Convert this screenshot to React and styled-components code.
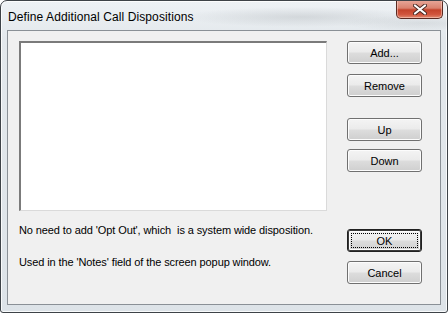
import styled, { createGlobalStyle } from "styled-components";

const GlobalStyle = createGlobalStyle`
  html, body {
    margin: 0;
    padding: 0;
    background: #ffffff;
  }
`;

const Window = styled.div`
  width: 448px;
  height: 313px;
  box-sizing: border-box;
  border: 1px solid #3e4348;
  border-radius: 7px 7px 3px 3px;
  background: linear-gradient(180deg, #eef2f5 0%, #e3e8ec 12%, #dde3e8 100%);
  display: flex;
  flex-direction: column;
  overflow: hidden;
  position: relative;
  box-shadow: inset 0 0 0 1px rgba(255, 255, 255, 0.8);
`;

const TitleBar = styled.div`
  height: 29px;
  flex: none;
  display: flex;
  align-items: flex-start;
  justify-content: space-between;
  padding: 0 4px 0 7px;
  background:
    radial-gradient(ellipse 120px 10px at 300px 16px, rgba(120, 125, 130, 0.2), transparent),
    radial-gradient(ellipse 80px 8px at 420px 22px, rgba(120, 125, 130, 0.14), transparent);
`;

const Title = styled.div`
  font-family: "Liberation Sans", Arial, sans-serif;
  font-size: 12px;
  color: #000;
  margin-top: 9px;
  letter-spacing: 0.1px;
`;

const CloseButton = styled.div`
  width: 47px;
  height: 19px;
  margin-top: -1px;
  box-sizing: border-box;
  border: 1px solid #5a2a22;
  border-top: none;
  border-radius: 0 0 5px 5px;
  background: linear-gradient(180deg, #e8a99b 0%, #d9826f 45%, #c4432b 55%, #d1553d 80%, #e08a70 100%);
  box-shadow: inset 0 0 0 1px rgba(255, 220, 210, 0.5);
  display: flex;
  align-items: center;
  justify-content: center;
`;

const Client = styled.div`
  flex: 1;
  margin: 0 6px 7px 6px;
  border: 1px solid #8a9096;
  background: #f0f0f0;
  display: flex;
  padding: 10px 18px 0 11px;
  gap: 20px;
`;

const LeftColumn = styled.div`
  display: flex;
  flex-direction: column;
`;

const ListBox = styled.div`
  width: 308px;
  height: 170px;
  box-sizing: border-box;
  background: #fff;
  border-top: 2px solid #7b7b7b;
  border-left: 2px solid #7b7b7b;
  border-right: 1px solid #dadada;
  border-bottom: 1px solid #dadada;
`;

const Note = styled.div`
  font-family: "Liberation Sans", Tahoma, sans-serif;
  font-size: 11px;
  letter-spacing: -0.1px;
  color: #000;
  white-space: pre;
  margin-top: ${(p) => p.$top}px;
`;

const ButtonColumn = styled.div`
  display: flex;
  flex-direction: column;
  width: 75px;
`;

const Button = styled.div`
  position: relative;
  height: 23px;
  box-sizing: border-box;
  margin-top: ${(p) => p.$top || 0}px;
  border: 1px solid ${(p) => (p.$default ? "#202020" : "#707070")};
  border-radius: 3px;
  background: linear-gradient(180deg, #f4f4f4 0%, #ebebeb 48%, #dddddd 52%, #cfcfcf 100%);
  box-shadow: ${(p) =>
    p.$default ? "inset 0 0 0 1px #3a3a3a, inset 0 0 0 2px #fcfcfc" : "inset 0 0 0 1px #fcfcfc"};
  display: flex;
  align-items: center;
  justify-content: center;
  font-family: "Liberation Sans", Tahoma, sans-serif;
  font-size: 11px;
  color: #000;

  ${(p) =>
    p.$default &&
    `
    &::after {
      content: "";
      position: absolute;
      inset: 3px;
      border: 1px dotted #000;
    }
  `}
`;

const CloseGlyph = () => (
  <svg width="14" height="11" viewBox="0 0 14 11">
    <path
      d="M2 1.5 L12 9.5 M12 1.5 L2 9.5"
      stroke="#4a2a24"
      strokeWidth="4"
      strokeLinecap="round"
    />
    <path
      d="M2 1.5 L12 9.5 M12 1.5 L2 9.5"
      stroke="#ffffff"
      strokeWidth="2.2"
      strokeLinecap="round"
    />
  </svg>
);

const App = () => {
  return (
    <>
      <GlobalStyle />
      <Window>
        <TitleBar>
          <Title>Define Additional Call Dispositions</Title>
          <CloseButton>
            <CloseGlyph />
          </CloseButton>
        </TitleBar>
        <Client>
          <LeftColumn>
            <ListBox />
            <Note $top={13}>No need to add 'Opt Out', which  is a system wide disposition.</Note>
            <Note $top={20}>Used in the 'Notes' field of the screen popup window.</Note>
          </LeftColumn>
          <ButtonColumn>
            <Button>Add...</Button>
            <Button $top={10}>Remove</Button>
            <Button $top={21}>Up</Button>
            <Button $top={8}>Down</Button>
            <Button $top={57} $default>
              OK
            </Button>
            <Button $top={9}>Cancel</Button>
          </ButtonColumn>
        </Client>
      </Window>
    </>
  );
};

export default App;
